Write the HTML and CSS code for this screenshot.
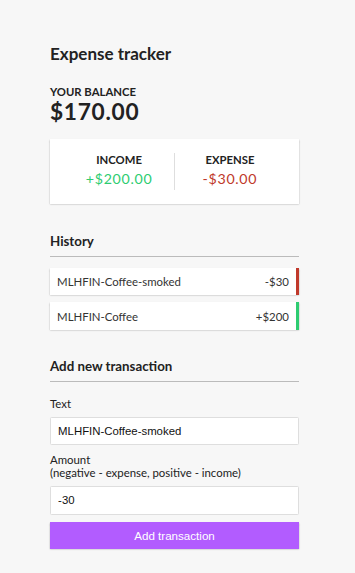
FILE: index.html
```html
<!DOCTYPE html>
<html lang="en">
<head>
<meta charset="UTF-8">
<title>Expense tracker</title>
<link rel="stylesheet" href="styles.css">
</head>
<body>
<div class="page">
  <h2 class="title">Expense tracker</h2>
  <div class="container">
    <h4>Your Balance</h4>
    <h1 class="balance">$170.00</h1>

    <div class="inc-exp">
      <div class="col col-first">
        <h4>Income</h4>
        <p class="money plus">+$200.00</p>
      </div>
      <div class="col">
        <h4>Expense</h4>
        <p class="money minus">-$30.00</p>
      </div>
    </div>

    <h3>History</h3>
    <ul class="list">
      <li class="item minus"><span>MLHFIN-Coffee-smoked</span><span>-$30</span></li>
      <li class="item plus"><span>MLHFIN-Coffee</span><span>+$200</span></li>
    </ul>

    <h3>Add new transaction</h3>
    <form class="form">
      <div class="form-control">
        <label class="label">Text</label>
        <input class="input" type="text" value="MLHFIN-Coffee-smoked">
      </div>
      <div class="form-control">
        <label class="label">Amount <br>(negative - expense, positive - income)</label>
        <input class="input" type="text" value="-30">
      </div>
      <button class="btn" type="button">Add transaction</button>
    </form>
  </div>
</div>
</body>
</html>
```

FILE: styles.css
```css
* { box-sizing: border-box; }

html, body {
  margin: 0;
  padding: 0;
}

body {
  background-color: #f7f7f7;
  font-family: Lato, "Noto Sans", sans-serif;
  color: #222;
}

.page {
  width: 249px;
  margin-left: 50px;
  padding-top: 42.5px;
  padding-bottom: 21px;
}

.title {
  font-size: 17px;
  font-weight: 700;
  margin: 0 0 21.3px;
  line-height: normal;
}

.container {
  margin: 0;
}

h4 {
  margin: 0;
  font-size: 11.3px;
  font-weight: 700;
  text-transform: uppercase;
  line-height: normal;
}

.balance {
  margin: 0;
  font-size: 22.7px;
  font-weight: 700;
  letter-spacing: 0.7px;
  line-height: normal;
}

.inc-exp {
  background-color: #fff;
  box-shadow: 0 0.7px 2.1px rgba(0,0,0,0.12), 0 0.7px 1.4px rgba(0,0,0,0.24);
  padding: 14.2px;
  display: flex;
  justify-content: space-between;
  margin: 14.2px 0;
}

.col {
  flex: 1;
  text-align: center;
}

.col-first {
  border-right: 1px solid #dedede;
}

.money {
  font-size: 14.2px;
  letter-spacing: 0.7px;
  margin: 3.5px 0;
  line-height: normal;
}

.money.plus { color: #2ecc71; }
.money.minus { color: #c0392b; }

h3 {
  font-size: 13.3px;
  font-weight: 700;
  border-bottom: 1px solid #bbb;
  padding-bottom: 7.1px;
  margin: 28.4px 0 7.1px;
  line-height: normal;
}

.list {
  list-style-type: none;
  padding: 0;
  margin: 11.3px 0 28.4px;
}

.item {
  background-color: #fff;
  box-shadow: 0 0.7px 2.1px rgba(0,0,0,0.12), 0 0.7px 1.4px rgba(0,0,0,0.24);
  color: #333;
  display: flex;
  justify-content: space-between;
  padding: 7.1px;
  margin: 7.1px 0;
  font-size: 11.4px;
  line-height: normal;
}

.item.plus { border-right: 3.5px solid #2ecc71; }
.item.minus { border-right: 3.5px solid #c0392b; }

.form { margin: 0; }

.label {
  display: inline-block;
  margin: 7.5px 0;
  font-size: 11.4px;
  line-height: normal;
}

.input {
  display: block;
  width: 100%;
  border: 1px solid #dedede;
  border-radius: 1.4px;
  font-family: "Liberation Sans", Arial, sans-serif;
  font-size: 11.4px;
  padding: 7.1px;
  color: #111;
  background: #fff;
  margin: 0;
}

.btn {
  display: block;
  width: 100%;
  background-color: #b25cff;
  color: #fff;
  border: 0;
  box-shadow: 0 0.7px 2.1px rgba(0,0,0,0.12), 0 0.7px 1.4px rgba(0,0,0,0.24);
  font-family: "Liberation Sans", Arial, sans-serif;
  font-size: 11.6px;
  padding: 7.1px;
  margin: 7.5px 0 21.3px;
}
```
